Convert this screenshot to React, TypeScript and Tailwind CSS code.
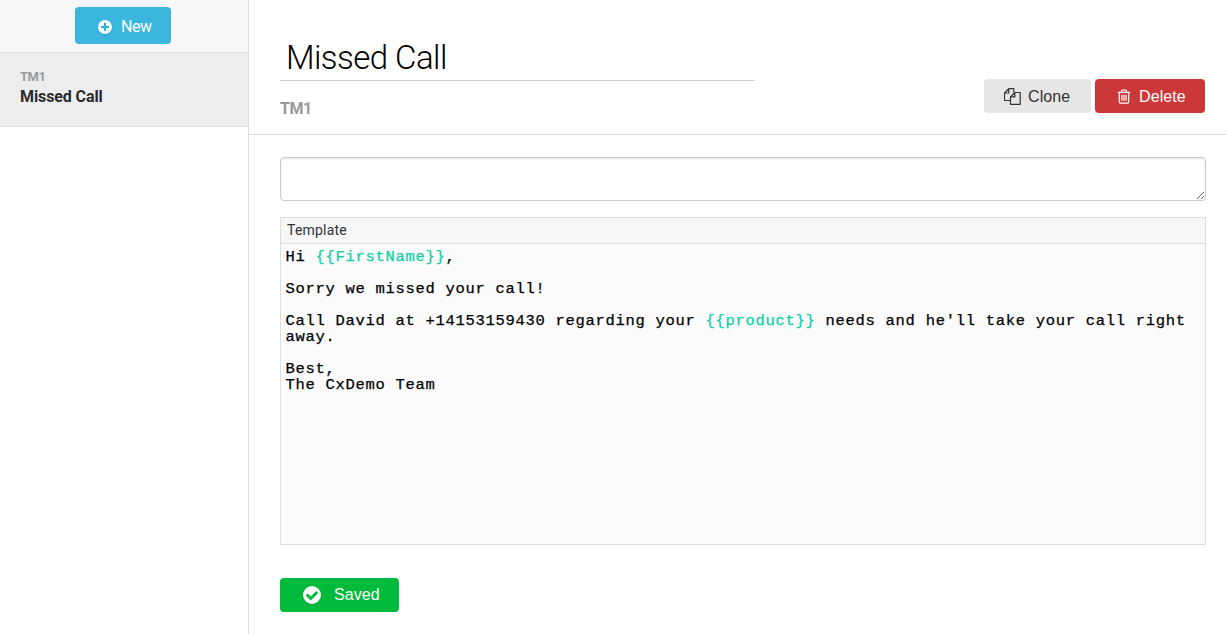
import type { ReactNode } from "react";

function PlusCircleIcon() {
  return (
    <svg viewBox="0 0 14 14" className="size-[14px] shrink-0 drop-shadow-[0_1px_1px_rgba(0,0,0,0.15)]">
      <path
        fill="currentColor"
        fillRule="evenodd"
        d="M7 0a7 7 0 1 1 0 14A7 7 0 0 1 7 0ZM6.4 3a.5.5 0 0 0-.5.5v2.4H3.5a.5.5 0 0 0-.5.5v1.2c0 .28.22.5.5.5h2.4v2.4c0 .28.22.5.5.5h1.2a.5.5 0 0 0 .5-.5V8.1h2.4a.5.5 0 0 0 .5-.5V6.4a.5.5 0 0 0-.5-.5H8.1V3.5a.5.5 0 0 0-.5-.5H6.4Z"
      />
    </svg>
  );
}

function CheckCircleIcon() {
  return (
    <svg viewBox="0 0 18 18" className="size-[18px] shrink-0 drop-shadow-[0_1px_1px_rgba(0,0,0,0.15)]">
      <circle cx="9" cy="9" r="9" fill="currentColor" />
      <path d="m3.7 8.6 4 3.9 6.6-6.6" fill="none" stroke="#00bb3b" strokeWidth="2.8" />
    </svg>
  );
}

function CopyIcon() {
  return (
    <svg viewBox="0 0 17 17" className="mb-px size-[17px] shrink-0" fill="none" stroke="currentColor" strokeWidth="1.2" strokeLinejoin="round">
      <path d="M6.5 12.5h-6V5l4.3-4.4h5v3.6M4.8.6V5H.5" />
      <path d="M6.5 8.9 10.8 4.5h5.4v11.8H6.5V8.9Zm4.3-4.4v4.4H6.5" />
    </svg>
  );
}

function TrashIcon() {
  return (
    <svg viewBox="0 0 14 15" className="mb-px h-[15px] w-[14px] shrink-0" fill="none" stroke="currentColor" strokeWidth="1.2" strokeLinejoin="round">
      <path d="M.8 3.4h12.4M4.3 3.2 5 1h4l.7 2.2M2.3 3.6v9.2c0 .9.5 1.4 1.2 1.4h7c.7 0 1.2-.5 1.2-1.4V3.6M4.9 5.8v6M7 5.8v6M9.1 5.8v6" />
    </svg>
  );
}

function Token({ children }: { children: ReactNode }) {
  return <span className="text-[#0bcfa5]">{children}</span>;
}

function Sidebar() {
  return (
    <aside className="flex w-[249px] shrink-0 flex-col border-r border-[#dedede] bg-white">
      <div className="flex h-[53px] justify-center border-b border-[#dedede] bg-[#f7f7f7] pt-[7px] pr-[2px]">
        <button className="flex h-[37px] w-24 items-center gap-[9px] rounded-[4px] bg-[#3ab6df] pt-[2px] pl-[23px] font-['Roboto',sans-serif] text-base tracking-[-0.4px] text-white">
          <PlusCircleIcon />
          <span>New</span>
        </button>
      </div>
      <div className="flex h-[74px] flex-col border-b border-[#dedede] bg-[#ededed] pt-[15px] pl-5 font-['Roboto',sans-serif] font-bold">
        <span className="text-[13px] leading-[18px] tracking-[-0.5px] text-[#999999]">TM1</span>
        <span className="text-base leading-[22px] tracking-[-0.1px] text-[#2b2b2b]">Missed Call</span>
      </div>
    </aside>
  );
}

function Header() {
  return (
    <header className="flex h-[135px] justify-between border-b border-[#dedede] pr-[21px] pl-[31px]">
      <div className="flex w-[475px] flex-col">
        <h1 className="h-[81px] border-b border-[#cccccc] pt-[37px] pl-[6px] font-['Roboto',sans-serif] text-[33px] leading-[42px] font-light tracking-[-0.55px] text-black">
          Missed Call
        </h1>
        <span className="mt-[18px] font-['Roboto',sans-serif] text-base leading-5 font-bold tracking-[-0.5px] text-[#999999]">TM1</span>
      </div>
      <div className="mt-[79px] flex h-[34px] gap-1 font-['Liberation_Sans',Arial,sans-serif] text-base tracking-[0.1px]">
        <button className="flex w-[107px] items-center gap-[7px] rounded-[4px] bg-[#e6e6e6] pt-px pl-[20px] text-[#333333]">
          <CopyIcon />
          <span>Clone</span>
        </button>
        <button className="flex w-[110px] items-center gap-[8px] rounded-[4px] bg-[#cb3837] pt-px pl-[22px] text-white">
          <TrashIcon />
          <span>Delete</span>
        </button>
      </div>
    </header>
  );
}

function Editor() {
  return (
    <section className="flex h-[328px] flex-col border border-[#dddddd] bg-[#fbfbfb]">
      <div className="h-[26px] shrink-0 border-b border-[#dddddd] bg-[#f7f7f7] pl-[6px] font-['Roboto',sans-serif] text-sm leading-[25px] tracking-[0.2px] text-[#333333]">
        Template
      </div>
      <div className="pt-[5px] pl-[4.5px] font-['Courier_New','Liberation_Mono',monospace] text-[15.5px] leading-4 tracking-[0.7px] whitespace-pre text-black [-webkit-text-stroke:0.25px_currentColor]">
        <p>Hi <Token>{"{{FirstName}}"}</Token>,</p>
        <p className="mt-4">Sorry we missed your call!</p>
        <p className="mt-4">Call David at +14153159430 regarding your <Token>{"{{product}}"}</Token> needs and he'll take your call right</p>
        <p>away.</p>
        <p className="mt-4">Best,</p>
        <p>The CxDemo Team</p>
      </div>
    </section>
  );
}

export default function App() {
  return (
    <div className="flex h-[634px] w-[1226px] overflow-hidden bg-white">
      <Sidebar />
      <main className="flex min-w-0 flex-1 flex-col">
        <Header />
        <div className="flex flex-col pt-[22px] pr-5 pl-[31px]">
          <textarea
            aria-label="Description"
            className="mb-4 block h-[44px] w-full resize-y rounded-[4px] border border-[#cccccc] bg-white shadow-[inset_0_1px_2px_rgba(0,0,0,0.12)]"
          />
          <Editor />
          <button className="mt-[33px] flex h-[34px] w-[119px] items-center gap-[13px] rounded-[4px] bg-[#00bb3b] pl-[23px] font-['Liberation_Sans',Arial,sans-serif] text-base tracking-[0.1px] text-white">
            <CheckCircleIcon />
            <span>Saved</span>
          </button>
        </div>
      </main>
    </div>
  );
}
